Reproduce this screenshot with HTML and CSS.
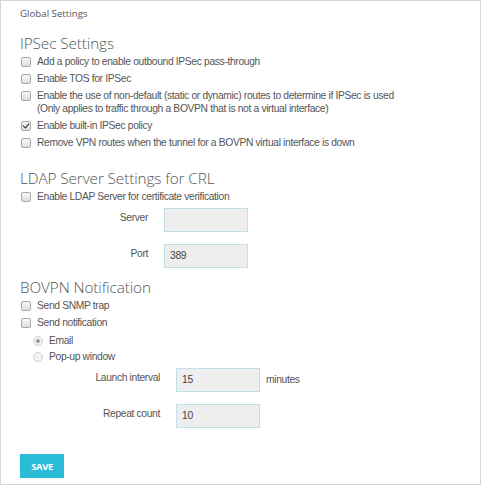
FILE: index.html
```html
<!DOCTYPE html>
<html>
<head>
<meta charset="utf-8">
<link rel="stylesheet" href="styles.css">
</head>
<body>
<div class="panel">
  <div class="panel-title">Global Settings</div>

  <h2 class="section-heading first">IPSec Settings</h2>
  <div class="check-list">
    <label class="check-row"><span class="box"></span><span>Add a policy to enable outbound IPSec pass-through</span></label>
    <label class="check-row"><span class="box"></span><span>Enable TOS for IPSec</span></label>
    <label class="check-row"><span class="box"></span><span>Enable the use of non-default (static or dynamic) routes to determine if IPSec is used<br>(Only applies to traffic through a BOVPN that is not a virtual interface)</span></label>
    <label class="check-row"><span class="box checked"></span><span>Enable built-in IPSec policy</span></label>
    <label class="check-row"><span class="box"></span><span>Remove VPN routes when the tunnel for a BOVPN virtual interface is down</span></label>
  </div>

  <h2 class="section-heading ldap">LDAP Server Settings for CRL</h2>
  <div class="check-list">
    <label class="check-row"><span class="box"></span><span>Enable LDAP Server for certificate verification</span></label>
  </div>
  <div class="field-grid">
    <span class="field-label">Server</span><span class="field-input"></span><span></span>
    <span class="field-label">Port</span><span class="field-input">389</span><span></span>
  </div>

  <h2 class="section-heading bovpn">BOVPN Notification</h2>
  <div class="check-list">
    <label class="check-row"><span class="box"></span><span>Send SNMP trap</span></label>
    <label class="check-row"><span class="box"></span><span>Send notification</span></label>
  </div>
  <div class="radio-list">
    <label class="radio-row"><span class="radio selected"></span><span>Email</span></label>
    <label class="radio-row"><span class="radio"></span><span>Pop-up window</span></label>
  </div>
  <div class="field-grid indented">
    <span class="field-label">Launch interval</span><span class="field-input">15</span><span class="field-unit">minutes</span>
    <span class="field-label">Repeat count</span><span class="field-input">10</span><span></span>
  </div>

  <div class="actions"><button class="save-btn">SAVE</button></div>
</div>
</body>
</html>
```

FILE: styles.css
```css
html, body {
  margin: 0;
  padding: 0;
  background: #ffffff;
}

.panel {
  box-sizing: border-box;
  width: 481px;
  height: 485px;
  border: 1px solid #d6d6d6;
  padding: 5px 0 0 19px;
  font-family: "Liberation Sans", Arial, sans-serif;
  font-size: 10.3px;
  letter-spacing: -0.35px;
  color: #555;
}

.panel-title {
  font-family: "Open Sans", sans-serif;
  font-size: 9.7px;
  letter-spacing: 0;
  line-height: 16px;
  color: #555;
}

.section-heading {
  margin: 0;
  font-family: "Open Sans", sans-serif;
  font-weight: 300;
  font-size: 15.3px;
  letter-spacing: -0.1px;
  line-height: 20px;
  color: #555;
}

.section-heading.first { margin-top: 11px; }
.section-heading.ldap { margin-top: 19px; }
.section-heading.bovpn { margin-top: 9px; }

.check-list {
  margin-top: 2px;
  display: flex;
  flex-direction: column;
  gap: 4px;
}

.check-row {
  display: flex;
  align-items: flex-start;
  gap: 6px;
  line-height: 13px;
  color: #555;
}

.box {
  flex: none;
  box-sizing: border-box;
  width: 10px;
  height: 10px;
  margin-top: 1.5px;
  margin-left: 1px;
  border: 1px solid #a8a8a8;
  border-radius: 2px;
  background: linear-gradient(#f7f7f7, #dedede);
  position: relative;
}

.box.checked::after {
  content: "";
  position: absolute;
  left: 2px;
  top: 0px;
  width: 3px;
  height: 5px;
  border-right: 1.6px solid #222;
  border-bottom: 1.6px solid #222;
  transform: rotate(40deg);
}

.radio-list {
  margin-top: 5px;
  margin-left: 12px;
  display: flex;
  flex-direction: column;
  gap: 3px;
}

.radio-row {
  display: flex;
  align-items: flex-start;
  gap: 6px;
  line-height: 13px;
}

.radio {
  flex: none;
  box-sizing: border-box;
  width: 10px;
  height: 10px;
  margin-top: 1.5px;
  margin-left: 1px;
  border: 1px solid #cfcfcf;
  border-radius: 50%;
  background: #f3f3f3;
  position: relative;
}

.radio.selected::after {
  content: "";
  position: absolute;
  left: 2px;
  top: 2px;
  width: 4px;
  height: 4px;
  border-radius: 50%;
  background: #9a9a9a;
}

.field-grid {
  margin-top: 5px;
  display: grid;
  grid-template-columns: 128px 84px auto;
  column-gap: 16px;
  row-gap: 12px;
  align-items: start;
}

.field-grid.indented {
  margin-left: 12px;
}

.field-label {
  text-align: right;
  padding-top: 3px;
  line-height: 13px;
  color: #555;
}

.field-input {
  box-sizing: border-box;
  height: 24px;
  border: 1px solid #bfe0e6;
  background: #eeeeee;
  padding-left: 5px;
  line-height: 22px;
  color: #444;
}

.field-unit {
  margin-left: -10px;
  line-height: 24px;
}

.actions {
  margin-top: 26px;
}

.save-btn {
  display: block;
  box-sizing: border-box;
  width: 44px;
  height: 24px;
  margin: 0;
  padding: 0;
  border: none;
  background: #29bcd8;
  color: #fff;
  font-family: "Open Sans", sans-serif;
  font-weight: 700;
  font-size: 9.5px;
  letter-spacing: -0.4px;
}
```
